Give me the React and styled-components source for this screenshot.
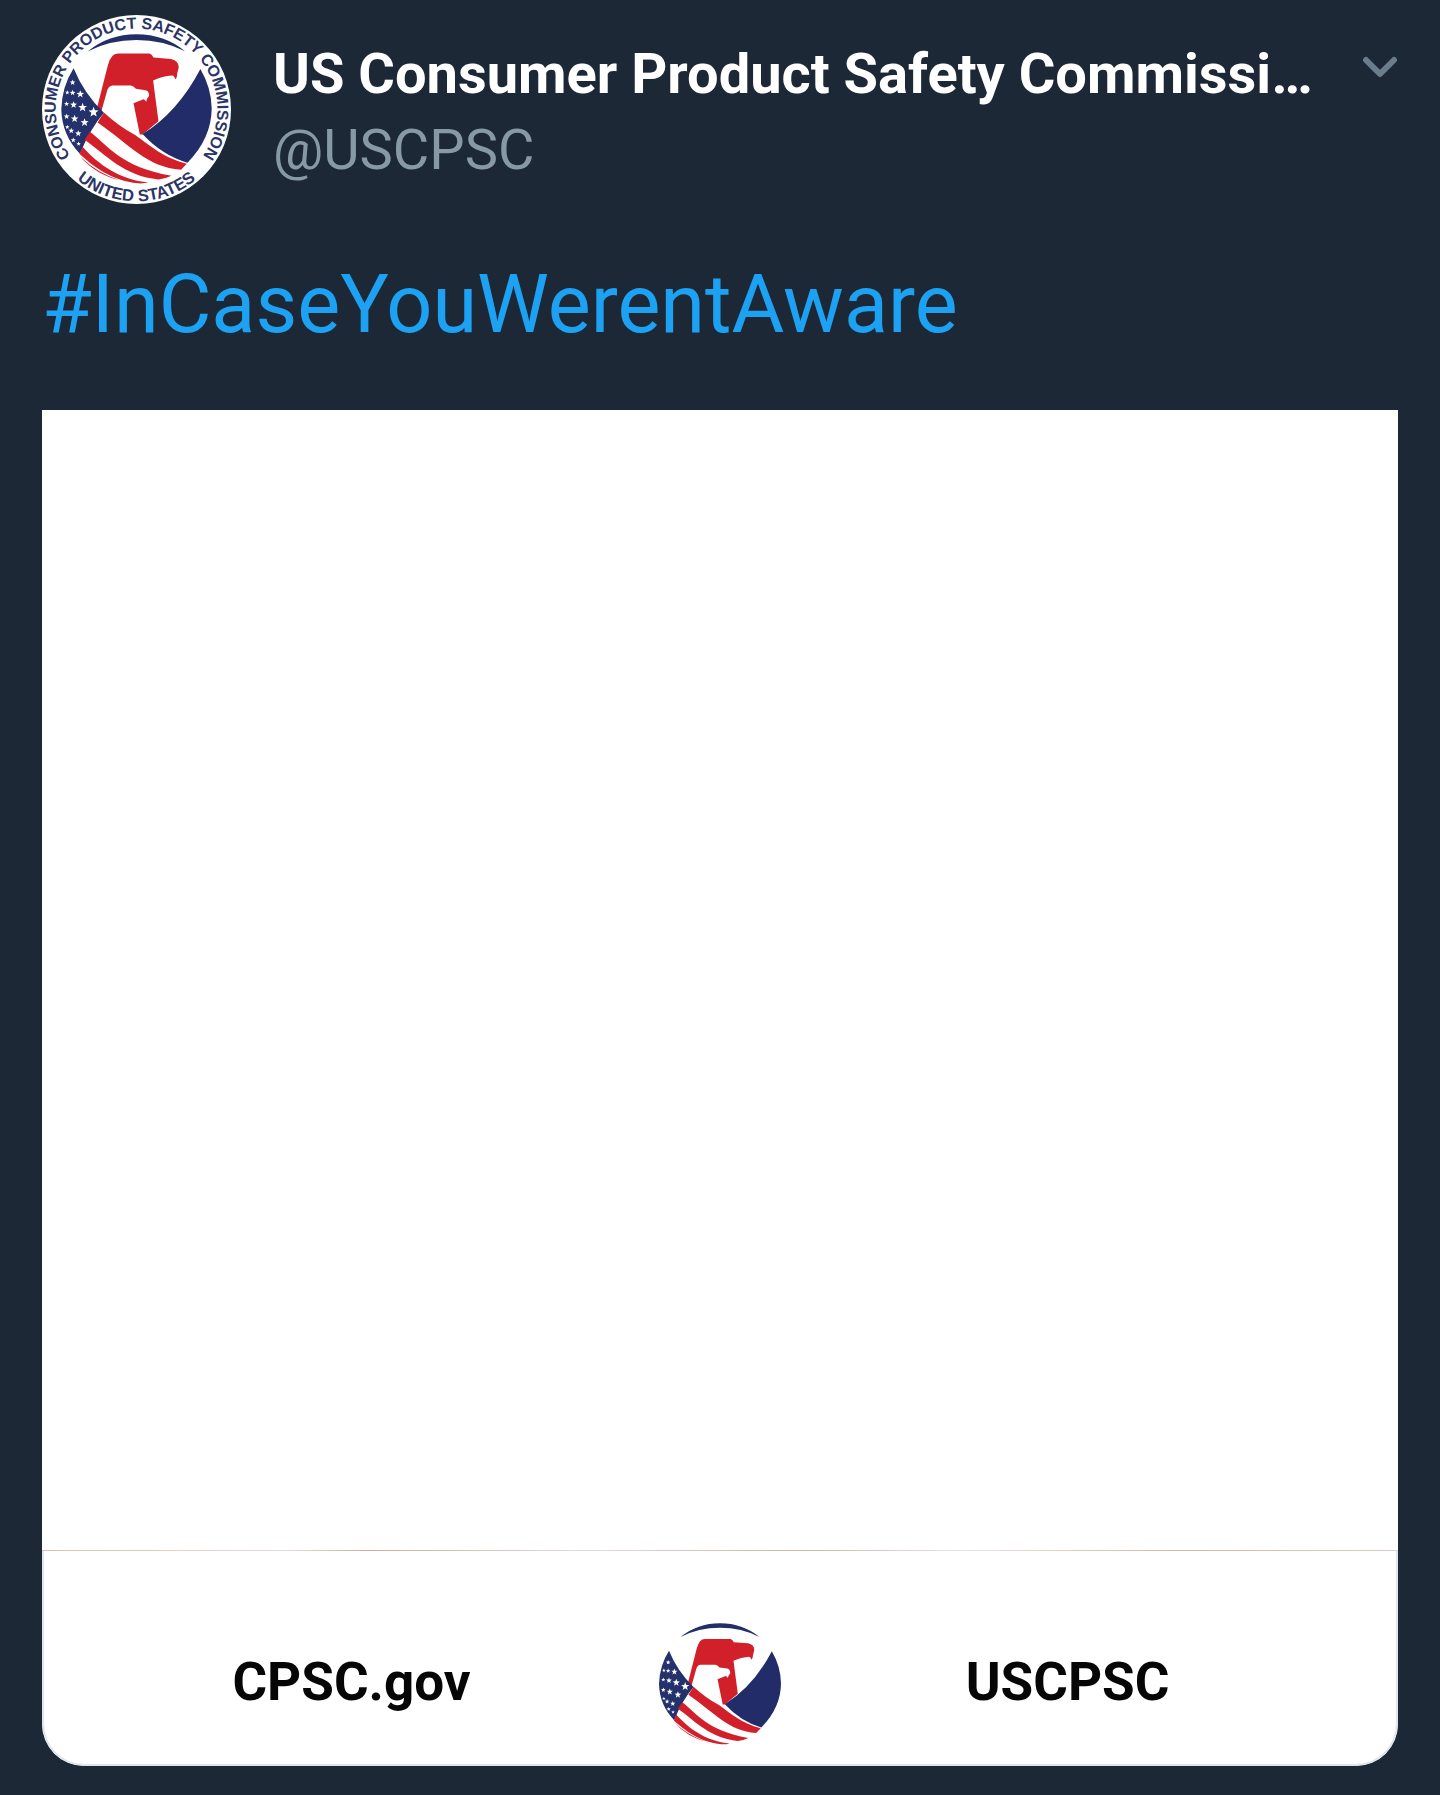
import { useId } from "react";
import styled, { createGlobalStyle } from "styled-components";

const GlobalStyle = createGlobalStyle`
	* {
		box-sizing: border-box;
	}
	body {
		margin: 0;
		background: #1c2835;
		font-family: Roboto, "Liberation Sans", sans-serif;
	}
`;

const Tweet = styled.article`
	padding: 15px 42px 29px;
`;

const Header = styled.header`
	display: flex;
	align-items: flex-start;
	gap: 42px;
`;

const AvatarLink = styled.a`
	flex: none;
	display: block;
	height: 189px;
`;

const Names = styled.div`
	flex: 1;
	min-width: 0;
	padding-top: 21px;
	font-size: 56px;
	line-height: 76px;
	white-space: nowrap;
`;

const DisplayName = styled.h1`
	margin: 0;
	font-size: inherit;
	font-weight: 700;
	color: #fff;
`;

const Handle = styled.a`
	color: #8899a6;
	text-decoration: none;
`;

const MenuButton = styled.button`
	flex: none;
	display: flex;
	margin-top: 41px;
	padding: 0;
	border: 0;
	background: none;
	color: #6b7d8c;
	cursor: pointer;
`;

const TweetText = styled.p`
	margin: 53px 0 57px;
	font-size: 81px;
	line-height: 96px;
`;

const Hashtag = styled.a`
	color: #1da1f2;
	text-decoration: none;
`;

const Card = styled.section`
	overflow: hidden;
	border-radius: 0 0 42px 42px;
	background: #fff;
`;

const Media = styled.div`
	height: 1141px;
	background: linear-gradient(
			90deg,
			#d9bfb6,
			#e8dcd8 18%,
			#c9aca0 24%,
			#e2dcda 40%,
			#cdb4ab 56%,
			#e8e4e2 68%,
			#d6b79f 84%,
			#dccfca
		)
		bottom / 100% 1px no-repeat;
`;

const CardFooter = styled.footer`
	display: grid;
	grid-template-columns: 1fr auto 1fr;
	align-items: center;
	justify-items: center;
	padding: 72px 0 19px;
	border: solid #dde6ed;
	border-width: 0 2px 2px;
	border-radius: 0 0 42px 42px;
`;

const FooterLink = styled.a`
	padding: 0 ${(props) => props.$inset || "0"} 4px 0;
	font-size: 53px;
	line-height: 64px;
	font-weight: 700;
	color: #060606;
	text-decoration: none;
`;

const RingText = styled.text`
	font-family: "Liberation Sans", Arial, sans-serif;
	font-size: ${(props) => props.$size}px;
	font-weight: 700;
	fill: #2b3566;
	text-anchor: middle;
`;

const Art = styled.svg`
	display: block;
`;

const stars = [
	[128, 232, 9],
	[112, 262, 7],
	[128, 263, 9],
	[151, 267, 12],
	[110, 296, 8],
	[131, 299, 11],
	[158, 307, 14],
	[191, 321, 16],
	[110, 334, 9],
	[134, 341, 12],
	[164, 352, 13],
	[112, 366, 7],
	[124, 377, 9],
	[145, 385, 10],
	[130, 405, 8],
	[146, 416, 7],
];

const starPoints = ([cx, cy, r]) =>
	Array.from({ length: 10 }, (_, i) => {
		const radius = i % 2 ? r * 0.42 : r;
		const angle = (Math.PI / 5) * i - Math.PI / 2;
		return `${cx + radius * Math.cos(angle)},${cy + radius * Math.sin(angle)}`;
	}).join(" ");

const Eagle = () => (
	<g>
		{/* top arc */}
		<path
			d="M174 138Q236 87 320 87Q404 87 466 138Q400 104 320 104Q240 104 174 138Z"
			fill="#222e66"
		/>
		{/* eagle */}
		<path
			d="M201 309L234 180Q243 145 264 145H359Q366 146 371 157L424 161Q447 166 447 186L442 206Q442 219 436 222Q434 211 427 211Q398 213 370 226L386 348L338 388H330L311 294L341 282Q347 284 349 290Q351 280 358 272Q357 256 347 255L318 251Q311 242 303 241H248Q236 242 232 256L214 320Z"
			fill="#d2202b"
		/>
		{/* right wing */}
		<path
			d="M512 191Q545 247 546 310Q545 400 473 473Q397 451 338 387Q445 320 512 191Z"
			fill="#222c68"
		/>
		{/* flag */}
		<path
			d="M131 189Q162 265 222 323Q181 371 150 446Q96 390 94 312Q96 244 131 189Z"
			fill="#25316b"
		/>
		{stars.map((star) => (
			<polygon key={star.join()} points={starPoints(star)} fill="#fff" />
		))}
		<g fill="#d2202b">
			<path d="M222 322Q265 362 316 390C365 425 400 458 471 476L454 494C350 486 302 420 203 352Z" />
			<path d="M180 380C232 418 270 486 425 512Q405 522 386 523C285 515 225 447 164 404Z" />
			<path d="M158 425C205 478 270 525 356 532Q342 536 325 535C245 528 185 480 149 447Z" />
			<path d="M151 455Q205 506 270 526Q198 509 151 455Z" />
		</g>
	</g>
);

const Seal = () => {
	const id = useId();
	return (
		<Art
			width="189"
			height="189"
			viewBox="36 29 568 568"
			role="img"
			aria-label="Consumer Product Safety Commission seal"
		>
			<defs>
				<path id={`${id}top`} d="M320 556A243 243 0 0 1 320 70A243 243 0 0 1 320 556" />
				<path id={`${id}bottom`} d="M44 313A276 276 0 0 0 596 313" />
			</defs>
			<circle cx="320" cy="313" r="284" fill="#fff" />
			<RingText $size={48}>
				<textPath href={`#${id}top`} startOffset="50%">
					CONSUMER PRODUCT SAFETY COMMISSION
				</textPath>
			</RingText>
			<RingText $size={50}>
				<textPath href={`#${id}bottom`} startOffset="50%">
					UNITED STATES
				</textPath>
			</RingText>
			<Eagle />
		</Art>
	);
};

const Emblem = () => (
	<Art width="122" height="122" viewBox="94 86 452 452" aria-hidden="true">
		<Eagle />
	</Art>
);

const Chevron = () => (
	<Art width="36" height="24" viewBox="0 0 36 24" aria-hidden="true">
		<path
			d="M4 4L18 18L32 4"
			fill="none"
			stroke="currentColor"
			strokeWidth="6"
			strokeLinecap="round"
			strokeLinejoin="round"
		/>
	</Art>
);

const App = () => {
	return (
		<>
			<GlobalStyle />
			<Tweet>
				<Header>
					<AvatarLink href="#profile">
						<Seal />
					</AvatarLink>
					<Names>
						<DisplayName>US Consumer Product Safety Commissi…</DisplayName>
						<Handle href="#profile">@USCPSC</Handle>
					</Names>
					<MenuButton type="button" aria-label="More options">
						<Chevron />
					</MenuButton>
				</Header>
				<TweetText>
					<Hashtag href="#hashtag">#InCaseYouWerentAware</Hashtag>
				</TweetText>
				<Card>
					<Media />
					<CardFooter>
						<FooterLink href="#site">CPSC.gov</FooterLink>
						<Emblem />
						<FooterLink href="#profile" $inset="42px">
							USCPSC
						</FooterLink>
					</CardFooter>
				</Card>
			</Tweet>
		</>
	);
};

export default App;
